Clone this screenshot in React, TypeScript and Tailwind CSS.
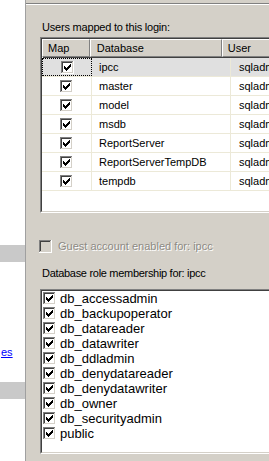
const databases = [
  { name: 'ipcc', user: 'sqladmin', selected: true },
  { name: 'master', user: 'sqladmin' },
  { name: 'model', user: 'sqladmin' },
  { name: 'msdb', user: 'sqladmin' },
  { name: 'ReportServer', user: 'sqladmin' },
  { name: 'ReportServerTempDB', user: 'sqladmin' },
  { name: 'tempdb', user: 'sqladmin' },
];

const roles = [
  'db_accessadmin',
  'db_backupoperator',
  'db_datareader',
  'db_datawriter',
  'db_ddladmin',
  'db_denydatareader',
  'db_denydatawriter',
  'db_owner',
  'db_securityadmin',
  'public',
];

// classic 3D checkbox, 13x13
function CheckBox({ checked = true, disabled = false }: { checked?: boolean; disabled?: boolean }) {
  return (
    <svg width="13" height="13" viewBox="0 0 13 13" shapeRendering="crispEdges" className="shrink-0 block">
      <rect x="0" y="0" width="13" height="13" fill="#ffffff" />
      <rect x="0" y="0" width="12" height="1" fill="#808080" />
      <rect x="0" y="0" width="1" height="12" fill="#808080" />
      <rect x="1" y="1" width="11" height="11" fill="#d4d0c8" />
      <rect x="1" y="1" width="10" height="1" fill="#404040" />
      <rect x="1" y="1" width="1" height="10" fill="#404040" />
      <rect x="2" y="2" width="9" height="9" fill={disabled ? '#d4d0c8' : '#ffffff'} />
      {checked && (
        <path
          fill="#000000"
          d="M9 3h1v1h-1z M8 4h2v1h-2z M3 5h1v1h-1z M7 5h3v1h-3z M3 6h2v1h-2z M6 6h3v1h-3z M3 7h5v1h-5z M4 8h3v1h-3z M5 9h1v1h-1z"
        />
      )}
    </svg>
  );
}

function Sunken({ className, children }: { className: string; children: React.ReactNode }) {
  return (
    <div className={`border-t border-l border-t-[#808080] border-l-[#808080] border-b border-r border-b-white border-r-white ${className}`}>
      <div className="h-full border-t border-l border-t-[#404040] border-l-[#404040] border-b border-b-[#d4d0c8] bg-white overflow-hidden">
        {children}
      </div>
    </div>
  );
}

function HeaderCell({ label, className }: { label: string; className: string }) {
  return (
    <div className={`h-[18px] bg-[#d4d0c8] border-t border-l border-white border-r border-b border-r-[#808080] border-b-[#808080] shadow-[1px_1px_0_#404040] flex items-center ${className}`}>
      {label}
    </div>
  );
}

export default function App() {
  return (
    <div className="w-[269px] h-[461px] flex bg-white overflow-hidden font-['Liberation_Sans',Arial,sans-serif] text-[11px] text-black leading-[13px]">
      {/* left strip */}
      <div className="w-[25px] shrink-0 flex flex-col">
        <div className="h-[245px]" />
        <div className="h-[17px] bg-[#c9c9c9]" />
        <div className="h-[84px]" />
        <div className="pl-px text-[#0000ff] underline">es</div>
        <div className="h-[23px]" />
        <div className="h-[17px] bg-[#c9c9c9]" />
      </div>
      <div className="w-px shrink-0 bg-[#a0a0a0]" />

      {/* right panel */}
      <div className="flex-1 min-w-0 bg-[#d4d0c8] flex flex-col overflow-hidden">
        <div className="h-[3px]" />
        <div className="h-px bg-[#808080]" />
        <div className="h-px bg-white" />

        <div className="h-[32px] flex items-end pb-[3px] pl-[16px] tracking-[-0.2px]">Users mapped to this login:</div>

        <div className="pl-[14px]">
          <Sunken className="w-[240px] h-[176px]">
            <div className="flex">
              <HeaderCell label="Map" className="w-[50px] pl-[5px]" />
              <HeaderCell label="Database" className="w-[139px] pl-[6px]" />
              <HeaderCell label="User" className="w-[60px] pl-[5px]" />
            </div>
            <div className="mt-px">
              {databases.map((db) => (
                <div
                  key={db.name}
                  className={`flex h-[19px] border-b border-[#ece9d8] ${db.selected ? 'bg-[#e0e0e0]' : ''}`}
                >
                  <div
                    className={`w-[50px] shrink-0 flex items-center justify-center border-r ${
                      db.selected ? 'border border-dotted border-black' : 'border-r-[#ece9d8]'
                    }`}
                  >
                    <CheckBox />
                  </div>
                  <div className="w-[139px] shrink-0 flex items-center pl-[7px] border-r border-[#ece9d8]">{db.name}</div>
                  <div className="flex-1 flex items-center pl-[8px]">{db.user}</div>
                </div>
              ))}
            </div>
          </Sunken>
        </div>

        <div className="mt-[27px] pl-[13px] flex items-center gap-[6px] h-[13px]">
          <CheckBox checked={false} disabled />
          <span className="text-[#8d8a84] [text-shadow:1px_1px_0_#ffffff]">Guest account enabled for: ipcc</span>
        </div>

        <div className="mt-[14px] pl-[16px] tracking-[-0.3px]">Database role membership for: ipcc</div>

        <div className="mt-[9px] pl-[14px]">
          <Sunken className="w-[240px] h-[165px]">
            <div className="flex flex-col text-[13px] leading-[15px]">
              {roles.map((r) => (
                <div key={r} className="h-[15px] flex items-center gap-[4px] pl-px">
                  <CheckBox />
                  <span>{r}</span>
                </div>
              ))}
            </div>
          </Sunken>
        </div>
      </div>
    </div>
  );
}
